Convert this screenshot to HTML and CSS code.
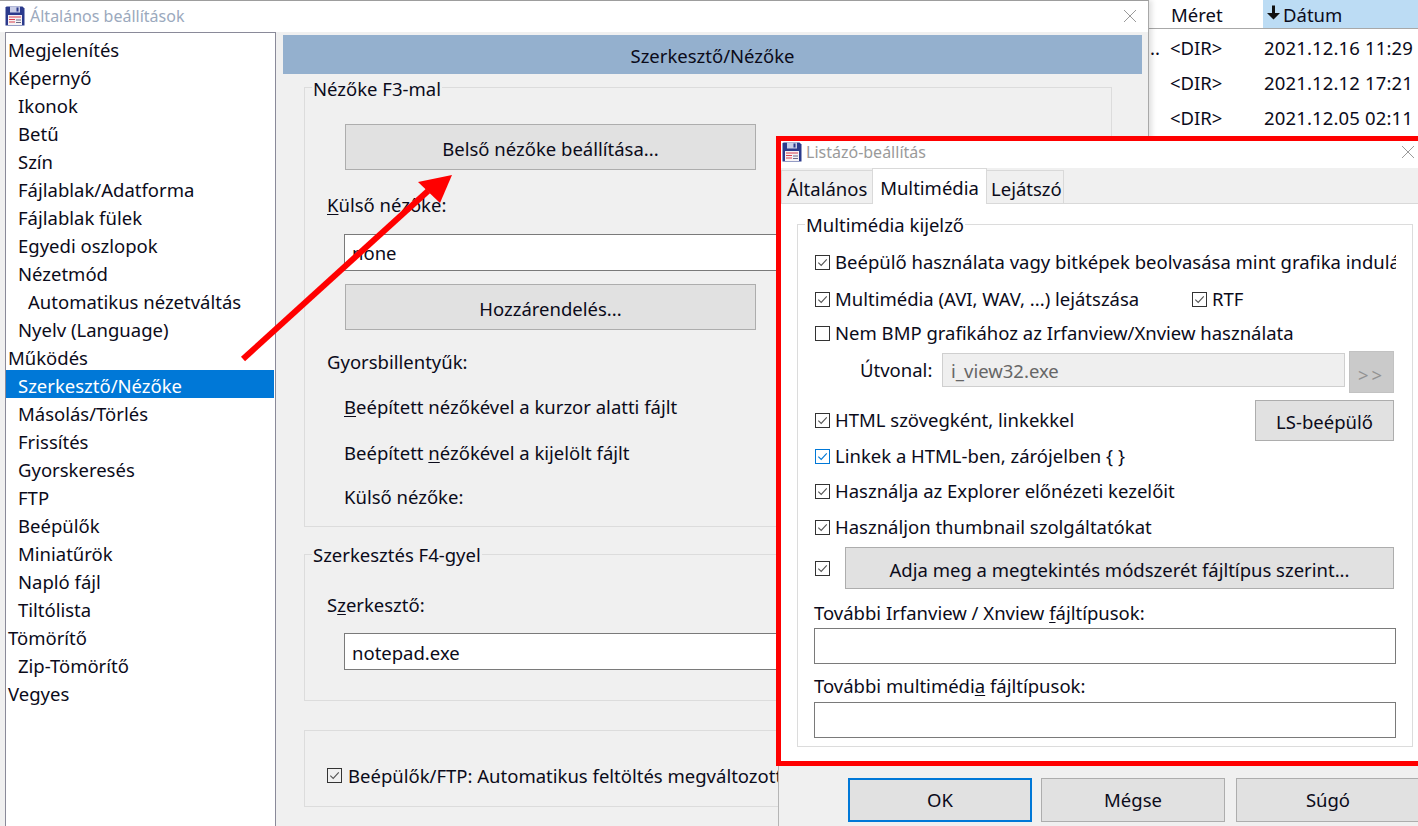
FILE: index.html
```html
<!DOCTYPE html>
<html lang="hu">
<head>
<meta charset="utf-8">
<title>Általános beállítások</title>
<link rel="stylesheet" href="styles.css">
</head>
<body>
<svg class="defs" width="0" height="0" aria-hidden="true">
  <symbol id="floppy" viewBox="0 0 20 20">
    <path d="M1.5 0.5H17.5L19.5 2.5V19.5H0.5V1.5Z" fill="#2b3a8c"/>
    <rect x="5" y="0.5" width="10" height="6" fill="#c9cde6"/>
    <rect x="11.5" y="1.5" width="2" height="4" fill="#2b3a8c"/>
    <rect x="3" y="9" width="14" height="10" fill="#f6f2f4"/>
    <path d="M4 11H16M4 13.5H10M4 16H10" stroke="#d8404f" stroke-width="1"/>
    <path d="M11 14H16M11 16.5H16" stroke="#6a6a88" stroke-width="1"/>
  </symbol>
  <symbol id="tick" viewBox="0 0 14 14">
    <path d="M2.5 7.2L5.6 10.2L11.6 3.6" fill="none" stroke="currentColor" stroke-width="1.2"/>
  </symbol>
  <symbol id="closex" viewBox="0 0 14 14">
    <path d="M1 1L13 13M13 1L1 13" fill="none" stroke="#9a9a9a" stroke-width="1"/>
  </symbol>
  <symbol id="sortdown" viewBox="0 0 15 15">
    <path d="M6 0.5H9V8H14L7.5 14.5L1 8H6Z" fill="#111"/>
  </symbol>
</svg>

<div class="backlist">
  <div class="list-head">
    <div class="col-size">Méret</div>
    <div class="col-date"><svg class="sort-arrow"><use href="#sortdown"/></svg>Dátum</div>
  </div>
  <div class="list-row"><span class="cell-name">..</span><span class="cell-size">&lt;DIR&gt;</span><span class="cell-date">2021.12.16 11:29</span></div>
  <div class="list-row"><span class="cell-name"></span><span class="cell-size">&lt;DIR&gt;</span><span class="cell-date">2021.12.12 17:21</span></div>
  <div class="list-row"><span class="cell-name"></span><span class="cell-size">&lt;DIR&gt;</span><span class="cell-date">2021.12.05 02:11</span></div>
</div>

<section class="win-main">
  <header class="title-main">
    <svg class="floppy"><use href="#floppy"/></svg>
    <span class="title-text">Általános beállítások</span>
    <svg class="closex"><use href="#closex"/></svg>
  </header>
  <div class="main-body">
    <ul class="tree">
      <li>Megjelenítés</li>
      <li>Képernyő</li>
      <li class="l1">Ikonok</li>
      <li class="l1">Betű</li>
      <li class="l1">Szín</li>
      <li class="l1">Fájlablak/Adatforma</li>
      <li class="l1">Fájlablak fülek</li>
      <li class="l1">Egyedi oszlopok</li>
      <li class="l1">Nézetmód</li>
      <li class="l2">Automatikus nézetváltás</li>
      <li class="l1">Nyelv (Language)</li>
      <li>Működés</li>
      <li class="l1 selected">Szerkesztő/Nézőke</li>
      <li class="l1">Másolás/Törlés</li>
      <li class="l1">Frissítés</li>
      <li class="l1">Gyorskeresés</li>
      <li class="l1">FTP</li>
      <li class="l1">Beépülők</li>
      <li class="l1">Miniatűrök</li>
      <li class="l1">Napló fájl</li>
      <li class="l1">Tiltólista</li>
      <li>Tömörítő</li>
      <li class="l1">Zip-Tömörítő</li>
      <li>Vegyes</li>
    </ul>
    <div class="pane">
      <div class="pane-head">Szerkesztő/Nézőke</div>
      <fieldset class="group g-view">
        <legend>Nézőke F3-mal</legend>
        <button class="btn btn-wide">Belső nézőke beállítása...</button>
        <div class="lbl lbl-ext"><u>K</u>ülső nézőke:</div>
        <div class="input input-main">none</div>
        <button class="btn btn-wide btn-assign">Hozzárendelés...</button>
        <div class="lbl lbl-keys">Gyorsbillentyűk:</div>
        <div class="sub sub-1"><u>B</u>eépített nézőkével a kurzor alatti fájlt</div>
        <div class="sub sub-2">Beépített <u>n</u>ézőkével a kijelölt fájlt</div>
        <div class="sub sub-3">Külső nézőke:</div>
      </fieldset>
      <fieldset class="group g-edit">
        <legend>Szerkesztés F4-gyel</legend>
        <div class="lbl lbl-editor">S<u>z</u>erkesztő:</div>
        <div class="input input-main">notepad.exe</div>
      </fieldset>
      <div class="group g-auto">
        <span class="check check-auto"><svg><use href="#tick"/></svg></span>
        <span class="auto-text">Beépülők/FTP: Automatikus feltöltés megváltozott fájlok</span>
      </div>
    </div>
  </div>
</section>

<svg class="arrow" viewBox="0 0 220 200" width="220" height="200" aria-hidden="true">
  <path d="M243 359L428 191" transform="translate(-240 -170)" stroke="#ff0000" stroke-width="6" fill="none"/>
  <path d="M452 175L418 182L440 203Z" transform="translate(-240 -170)" fill="#ff0000"/>
</svg>

<section class="win-lister">
  <div class="red-frame">
    <header class="title-lister">
      <svg class="floppy"><use href="#floppy"/></svg>
      <span class="title-text-l">Listázó-beállítás</span>
      <svg class="closex"><use href="#closex"/></svg>
    </header>
    <nav class="tabs">
      <div class="tab tab-gen">Általános</div>
      <div class="tab active">Multimédia</div>
      <div class="tab tab-play">Lejátszó</div>
    </nav>
    <div class="tab-page">
      <fieldset class="mgroup">
        <legend>Multimédia kijelző</legend>
        <div class="row row-1"><span class="check"><svg><use href="#tick"/></svg></span><span class="clip">Beépülő használata vagy bitképek beolvasása mint grafika indulásakor</span></div>
        <div class="row row-2"><span class="check"><svg><use href="#tick"/></svg></span><span class="r2-text">Multimédia (AVI, WAV, ...) lejátszása</span><span class="check"><svg><use href="#tick"/></svg></span><span>RTF</span></div>
        <div class="row row-3"><span class="check"></span><span>Nem BMP grafikához az Irfanview/Xnview használata</span></div>
        <div class="row row-path"><span class="path-label">Útvonal:</span><div class="path-input">i_view32.exe</div><button class="btn-more">&gt;&gt;</button></div>
        <div class="row row-html"><span class="check"><svg><use href="#tick"/></svg></span><span class="grow">HTML szövegként, linkekkel</span><button class="btn btn-ls">LS-beépülő</button></div>
        <div class="row row-links"><span class="check check-blue"><svg><use href="#tick"/></svg></span><span>Linkek a HTML-ben, zárójelben { }</span></div>
        <div class="row row-explorer"><span class="check"><svg><use href="#tick"/></svg></span><span>Használja az Explorer előnézeti kezelőit</span></div>
        <div class="row row-thumb"><span class="check"><svg><use href="#tick"/></svg></span><span>Használjon thumbnail szolgáltatókat</span></div>
        <div class="row row-mode"><span class="check"><svg><use href="#tick"/></svg></span><button class="btn btn-mode">Adja meg a megtekintés módszerét fájltípus szerint...</button></div>
        <div class="cap cap-1">További Irfanview / Xnview <u>f</u>ájltípusok:</div>
        <div class="input input-l"></div>
        <div class="cap cap-2">További multimédi<u>a</u> fájltípusok:</div>
        <div class="input input-l"></div>
      </fieldset>
    </div>
  </div>
  <footer class="lister-foot">
    <button class="btn btn-foot btn-ok">OK</button>
    <button class="btn btn-foot">Mégse</button>
    <button class="btn btn-foot btn-last">Súgó</button>
  </footer>
</section>
</body>
</html>
```
FILE: styles.css
```css
* { box-sizing: border-box; }
html, body { margin: 0; height: 826px; overflow: hidden; }
body {
  position: relative;
  width: 1418px;
  background: #fff;
  font-family: "Noto Sans", "Open Sans", sans-serif;
  font-size: 18.5px;
  line-height: 24px;
  color: #0b0b1a;
}
.defs { position: absolute; }
u { text-underline-offset: 2px; text-decoration-thickness: 1px; }
button { font: inherit; color: inherit; padding: 0; }
fieldset { margin: 0; min-width: 0; }

/* background file list */
.backlist { position: absolute; left: 1148px; top: 0; width: 270px; height: 140px; }
.list-head { display: flex; height: 29px; border-bottom: 1px solid #a8a8a8; background: #fff; }
.col-size { width: 115px; padding: 3px 0 0 23px; }
.col-date { flex: 1; display: flex; background: #bcdcf4; padding: 3px 0 0 3px; }
.sort-arrow { width: 15px; height: 15px; margin: 2px 2px 0 0; flex: none; }
.list-row { display: flex; height: 35px; padding-top: 7px; white-space: nowrap; }
.cell-name { width: 22px; padding-left: 2px; }
.cell-size { width: 94px; }
.cell-date { letter-spacing: .15px; }

/* main settings window */
.win-main {
  position: absolute; left: 0; top: 0; width: 1149px; height: 826px;
  background: #f0f0f0;
  border-top: 1px solid #9d9d9d;
  border-right: 1px solid #a8a8a8;
  box-shadow: 3px 0 5px rgba(0,0,0,.12);
}
.title-main { display: flex; align-items: center; height: 31px; padding: 0 11px 2px 5px; background: #fff; }
.floppy { width: 20px; height: 20px; flex: none; }
.title-text { flex: 1; margin-left: 5px; color: #9ba9bd; font-size: 16px; }
.closex { width: 14px; height: 14px; flex: none; }
.main-body { display: flex; }
.tree {
  list-style: none; margin: 0 0 0 5px; padding: 1px 0 0;
  width: 271px; height: 795px;
  background: #fff; border: 1px solid #8a8a99; border-bottom: 0;
}
.tree li { height: 28px; line-height: 32px; padding-left: 2px; white-space: nowrap; overflow: hidden; }
.tree .l1 { padding-left: 12px; }
.tree .l2 { padding-left: 22px; }
.tree .selected { background: #0078d7; color: #fff; margin-right: 1px; }
.pane { margin-left: 7px; width: 859px; padding-top: 3px; }
.pane-head {
  height: 39px; line-height: 41px; text-align: center;
  background: #94b0ce; color: #0b0b1a;
}
.group { position: relative; margin: 0 0 0 21px; width: 808px; border: 1px solid #dcdcdc; padding: 0; }
.group legend { margin-left: 7px; padding: 0 1px; line-height: 27px; height: 24px; }
.group.g-edit legend { line-height: 25px; }
.g-view { margin-top: 1px; height: 452px; }
.g-edit { margin-top: 15px; height: 159px; }
.g-auto { margin-top: 29px; height: 77px; display: flex; align-items: center; padding: 14px 0 0 22px; overflow: hidden; }
.btn { display: block; background: #e1e1e1; border: 1px solid #adadad; text-align: center; padding-top: 3px; }
.btn-wide { width: 411px; height: 46px; margin: 25px 0 0 40px; }
.btn-wide.btn-assign { margin-top: 13px; }
.lbl { margin-left: 22px; }
.lbl-ext { margin-top: 23px; }
.lbl-keys { margin-top: 20px; }
.lbl-editor { margin-top: 27px; }
.input { background: #fff; border: 1px solid #7a7a7a; }
.input-main { margin: 17px 0 0 39px; width: 780px; height: 37px; padding: 6px 0 0 7px; }
.lbl-editor + .input-main { margin-top: 16px; padding-top: 7px; }
.sub { margin-left: 39px; }
.sub-1 { margin-top: 21px; }
.sub-2 { margin-top: 22px; }
.sub-3 { margin-top: 20px; }
.check {
  display: inline-block; flex: none; width: 15px; height: 15px;
  border: 1px solid #333; background: transparent; color: #555;
}
.check svg { display: block; width: 13px; height: 13px; }
.check-blue { border-color: #0078d7; color: #0078d7; }
.check-auto { margin-right: 6px; }
.auto-text { white-space: nowrap; }

/* lister dialog */
.win-lister {
  position: absolute; left: 776px; top: 136px; width: 642px; height: 690px;
}
.red-frame {
  height: 630px;
  background: #fff;
  border: 5px solid #ff0000;
  border-right: 0;
  overflow: hidden;
}
.title-lister { display: flex; align-items: center; height: 27px; padding: 0 3px 5px 1px; background: #fff; }
.title-text-l { flex: 1; margin-left: 4px; color: #9a9a9a; font-size: 16px; }
.tabs { display: flex; align-items: flex-end; height: 36px; background: #f0f0f0; border-bottom: 1px solid #d9d9d9; }
.tab { height: 33px; padding: 5px 3px 0 5px; background: #f0f0f0; border: 1px solid #d9d9d9; border-bottom: 0; margin-right: -1px; line-height: 26px; white-space: nowrap; }
.tab-gen { width: 92px; }
.tab-play { width: 78px; padding-left: 4px; }
.tab.active { width: 115px; height: 36px; background: #fff; padding: 6px 0 0; text-align: center; margin-bottom: -1px; position: relative; }
.tab-page { padding: 8px 0 0 16px; }
.mgroup { position: relative; width: 616px; height: 535px; border: 1px solid #dcdcdc; padding: 0; }
.mgroup legend { margin-left: 7px; padding: 0 1px; height: 24px; line-height: 26px; }
.row { display: flex; align-items: center; height: 24px; margin-left: 17px; width: 579px; white-space: nowrap; }
.row .check { margin-right: 5px; }
.clip { overflow: hidden; width: 561px; flex: none; }
.row-1 { margin-top: 14px; }
.row-2 { margin-top: 13px; }
.r2-text { width: 357px; flex: none; }
.row-3 { margin-top: 10px; }
.row-path { margin-top: 6px; height: 42px; margin-left: 62px; width: 534px; align-items: flex-start; }
.path-label { width: 82px; padding-top: 7px; flex: none; }
.path-input { width: 403px; height: 34px; margin: 2px 4px 0 0; padding: 5px 8px 0; background: #efefef; border: 1px solid #cfcfcf; color: #666; flex: none; }
.btn-more { width: 45px; height: 42px; background: #cacaca; border: 1px solid #c2c2c2; color: #929292; letter-spacing: 3px; padding-top: 6px; flex: none; }
.row-html { margin-top: 7px; height: 41px; }
.grow { flex: 1; padding-bottom: 2px; }
.btn-ls { width: 139px; height: 41px; }
.row-links { margin-top: 3px; }
.row-explorer { margin-top: 11px; }
.row-thumb { margin-top: 12px; }
.row-mode { margin-top: 8px; height: 42px; }
.row .btn-mode { width: 549px; height: 42px; margin-left: 10px; }
.cap { margin-left: 16px; }
.cap-1 { margin-top: 12px; }
.cap-2 { margin-top: 10px; }
.input-l { width: 582px; height: 36px; margin: 3px 0 0 16px; }
.cap-2 + .input-l { margin-top: 4px; }
.lister-foot { display: flex; height: 60px; padding: 12px 0 0 69px; margin-left: 2px; background: #f0f0f0; border-left: 1px solid #b5b5b5; }
.btn.btn-foot { width: 184px; height: 44px; margin-right: 9px; flex: none; padding-top: 0; }
.btn-ok { border: 2px solid #0078d7; }
.btn.btn-last { margin-left: 2px; }
.arrow { position: absolute; left: 240px; top: 170px; }
```
